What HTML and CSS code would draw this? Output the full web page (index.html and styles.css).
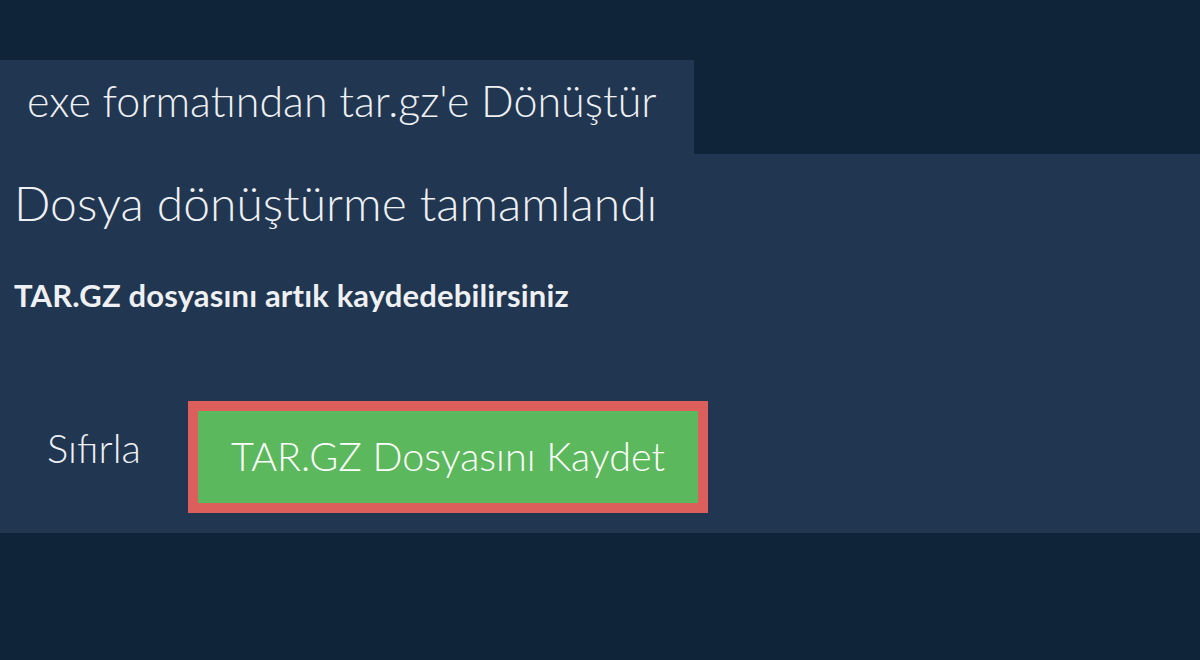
FILE: index.html
```html
<!DOCTYPE html>
<html lang="tr">
<head>
<meta charset="utf-8">
<link rel="stylesheet" href="styles.css">
</head>
<body>
<div class="page">
  <div class="tabs">
    <div class="tab">exe formatından tar.gz'e Dönüştür</div>
  </div>
  <div class="panel">
    <h1 class="title">Dosya dönüştürme tamamlandı</h1>
    <p class="subtitle">TAR.GZ dosyasını artık kaydedebilirsiniz</p>
    <div class="actions">
      <button class="reset">Sıfırla</button>
      <div class="save-wrap"><button class="save">TAR.GZ Dosyasını Kaydet</button></div>
    </div>
  </div>
</div>
</body>
</html>
```
FILE: styles.css
```css
html, body {
  margin: 0;
  padding: 0;
  background: #0f2339;
  font-family: Lato, "Open Sans", sans-serif;
  color: #ffffff;
}
.page {
  padding-top: 60px;
  width: 1200px;
  height: 660px;
  box-sizing: border-box;
}
.tabs {
  display: flex;
}
.tab {
  background: #213650;
  width: 694px;
  height: 94px;
  box-sizing: border-box;
  padding-left: 27px;
  padding-bottom: 14px;
  display: flex;
  align-items: center;
  font-size: 43px;
  font-weight: 300;
  color: #eef0f3;
  white-space: nowrap;
}
.panel {
  background: #213650;
  height: 379px;
  box-sizing: border-box;
  padding: 20px 14px 0 14px;
}
.title {
  margin: 0;
  font-size: 48px;
  font-weight: 300;
  line-height: 58px;
  color: #eef0f3;
}
.subtitle {
  margin: 44px 0 0 0;
  font-size: 31px;
  font-weight: 700;
  line-height: 38px;
  letter-spacing: 0.15px;
  color: #eef0f3;
}
.actions {
  display: flex;
  align-items: flex-start;
  margin-top: 87px;
}
.reset {
  background: none;
  border: none;
  font-family: inherit;
  font-size: 40px;
  font-weight: 300;
  line-height: 48px;
  color: #eef0f3;
  padding: 0;
  margin: 23px 0 0 33px;
  width: 141px;
  text-align: left;
}
.save-wrap {
  background: #dc5f5c;
  padding: 10px;
}
.save {
  display: block;
  background: #5cb85c;
  border: none;
  width: 500px;
  height: 92px;
  font-family: inherit;
  font-size: 39.5px;
  font-weight: 300;
  line-height: 48px;
  color: #ffffff;
  padding: 0 0 2px 0;
}
```
